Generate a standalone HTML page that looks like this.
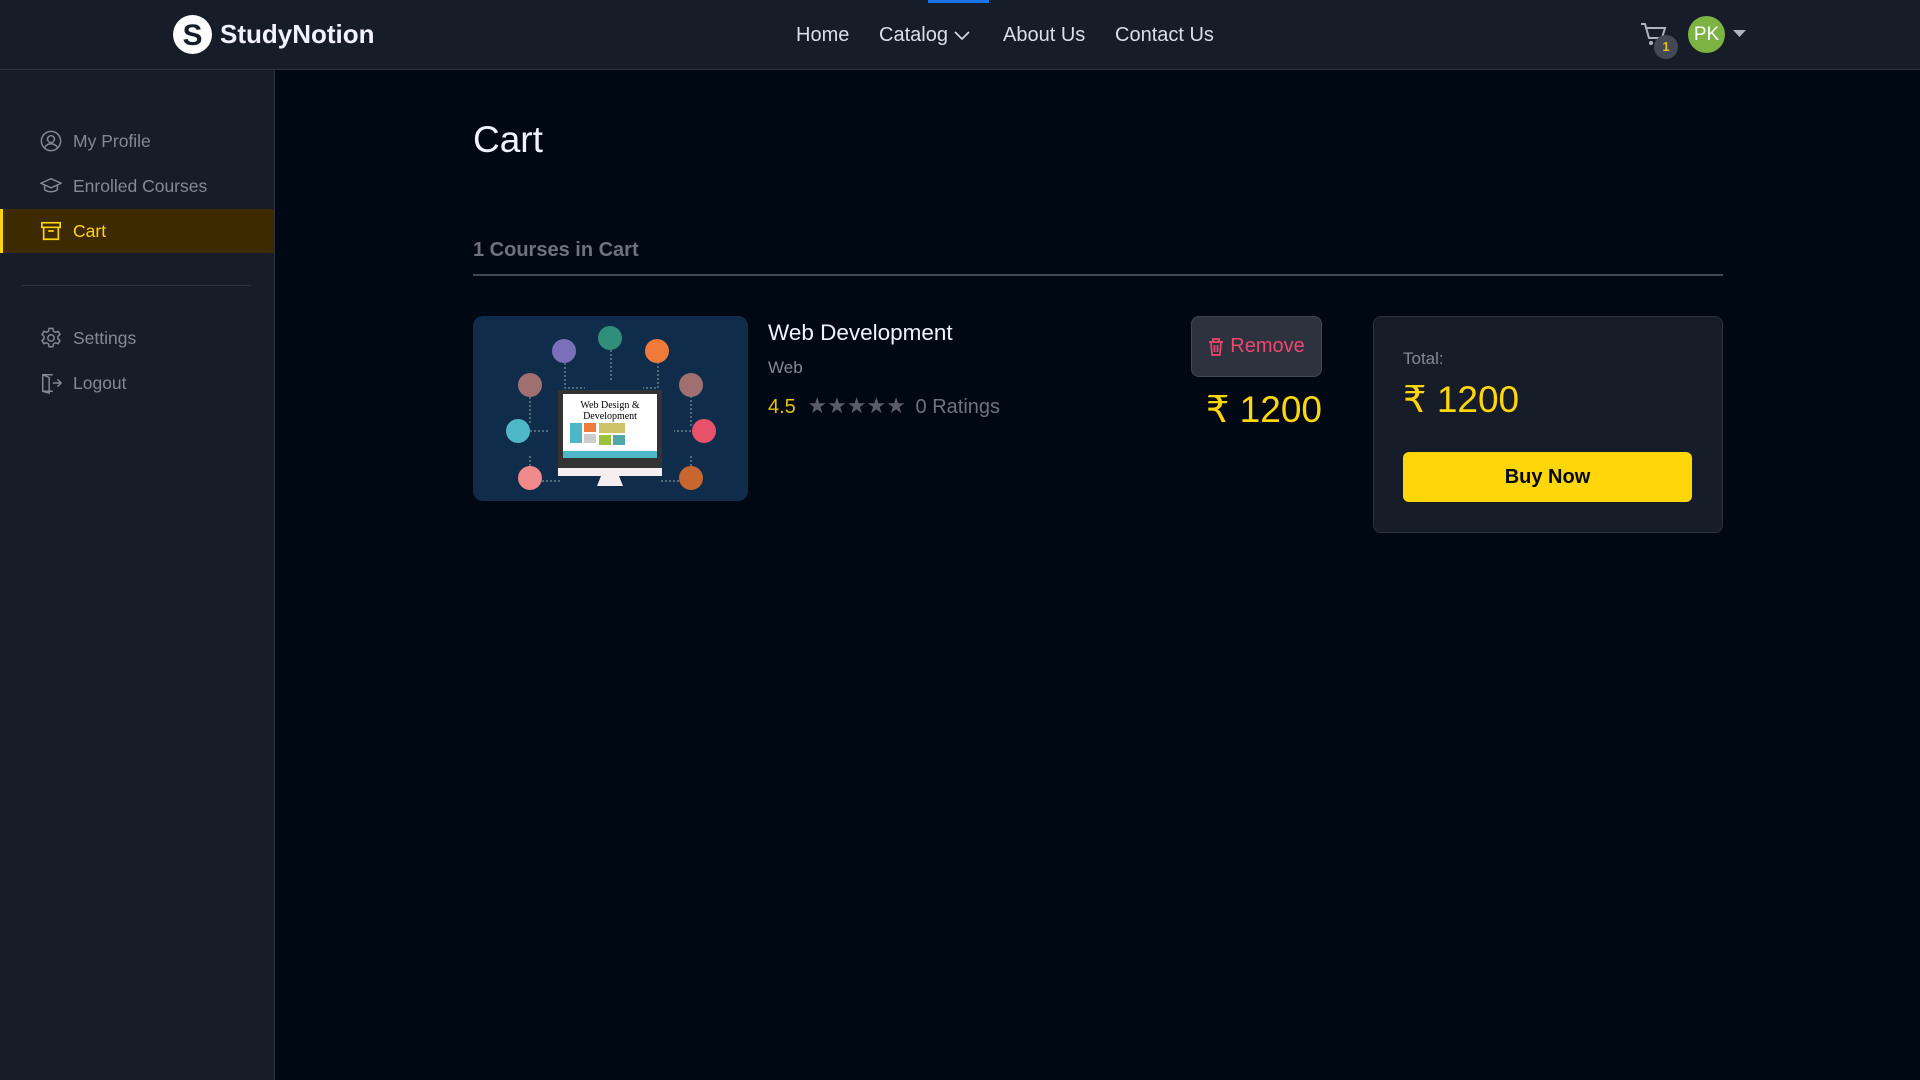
<!DOCTYPE html>
<html><head><meta charset="utf-8"><style>
*{margin:0;padding:0;box-sizing:border-box}
body{width:1920px;height:1080px;background:#000814;font-family:"Liberation Sans",Arial,sans-serif;position:relative;overflow:hidden;color:#F1F2FF}
.hdr{position:absolute;left:0;top:0;width:1920px;height:70px;background:#161D29;border-bottom:1px solid #2C333F}
.abs{position:absolute}
.nav{position:absolute;top:24px;font-size:20px;color:#DBDDEA}
.side{position:absolute;left:0;top:70px;width:275px;height:1010px;background:#161D29;border-right:1px solid #2C333F}
.it{position:absolute;left:0;width:274px;height:44px;display:flex;align-items:center;padding-left:40px;font-size:17.5px;color:#838894}
.it svg{margin-right:11px}
</style></head><body>
<div class="hdr"></div>
<div class="abs" style="left:928px;top:0;width:61px;height:3px;background:#1a73e8"></div>
<svg class="abs" style="left:172px;top:14px" width="41" height="41" viewBox="0 0 40 40"><circle cx="20" cy="20" r="19" fill="#fff"/><text x="20" y="30" text-anchor="middle" font-family="Liberation Sans" font-weight="bold" font-size="29" fill="#161D29">S</text></svg>
<div class="abs" style="left:220px;top:19px;font-size:26px;font-weight:bold;color:#F1F2FF">StudyNotion</div>
<div class="nav" style="left:796px">Home</div>
<div class="nav" style="left:879px">Catalog <svg width="16" height="10" viewBox="0 0 16 10" style="vertical-align:middle"><path d="M1 1l7 7 7-7" fill="none" stroke="#DBDDEA" stroke-width="1.6"/></svg></div>
<div class="nav" style="left:1003px">About Us</div>
<div class="nav" style="left:1115px">Contact Us</div>
<svg class="abs" style="left:1640px;top:22px" width="28" height="26" viewBox="0 0 28 26"><path d="M1 2h4l4 14h13l3-10H7" fill="none" stroke="#AFB2BF" stroke-width="2"/><circle cx="11" cy="21" r="2" fill="#AFB2BF"/><circle cx="20" cy="21" r="2" fill="#AFB2BF"/></svg>
<div class="abs" style="left:1654px;top:35px;width:24px;height:24px;border-radius:50%;background:#424854;color:#E7C009;font-size:13px;font-weight:bold;text-align:center;line-height:24px">1</div>
<div class="abs" style="left:1688px;top:16px;width:37px;height:37px;border-radius:50%;background:#7CB342;color:#fff;font-size:19px;text-align:center;line-height:37px">PK</div>
<svg class="abs" style="left:1733px;top:30px" width="13" height="8"><path d="M0 0h13L6.5 7z" fill="#AFB2BF"/></svg>

<div class="side">
<div class="it" style="top:49px"><svg width="22" height="22" viewBox="0 0 24 24" fill="none" stroke="#838894" stroke-width="1.6"><circle cx="12" cy="12" r="10.5"/><circle cx="12" cy="10" r="3.8"/><path d="M5 19c2-3 4.5-4 7-4s5 1 7 4"/></svg>My Profile</div>
<div class="it" style="top:94px"><svg width="22" height="22" viewBox="0 0 24 24" fill="none" stroke="#838894" stroke-width="1.6"><path d="M1 9l11-5 11 5-11 5z"/><path d="M5 11v5c3 3 11 3 14 0v-5"/></svg>Enrolled Courses</div>
<div class="it" style="top:139px;background:#3D2A01;border-left:3px solid #FFD60A;padding-left:37px;color:#FFD60A"><svg width="22" height="22" viewBox="0 0 24 24" fill="none" stroke="#FFD60A" stroke-width="1.8"><rect x="2" y="3" width="20" height="5"/><path d="M4 8v13h16V8M9 12h6"/></svg>Cart</div>
<div class="abs" style="left:22px;top:215px;width:229px;height:1px;background:#2C333F"></div>
<div class="it" style="top:246px"><svg width="22" height="22" viewBox="0 0 24 24" fill="none" stroke="#838894" stroke-width="1.6"><circle cx="12" cy="12" r="3.5"/><path d="M10 1.5h4l.6 3 2.3 1.3 2.9-1 2 3.4-2.3 2v2.6l2.3 2-2 3.4-2.9-1-2.3 1.3-.6 3h-4l-.6-3-2.3-1.3-2.9 1-2-3.4 2.3-2v-2.6l-2.3-2 2-3.4 2.9 1 2.3-1.3z"/></svg>Settings</div>
<div class="it" style="top:291px"><svg width="22" height="22" viewBox="0 0 24 24" fill="none" stroke="#838894" stroke-width="1.6"><path d="M14 3H3v18h11M3 3l7 3v17l-7-2M14 12h9M19 8l4 4-4 4"/></svg>Logout</div>
</div>

<div class="abs" style="left:473px;top:119px;font-size:37px;color:#F1F2FF">Cart</div>
<div class="abs" style="left:473px;top:239px;font-size:20px;font-weight:bold;color:#6E727F">1 Courses in Cart</div>
<div class="abs" style="left:473px;top:274px;width:1250px;height:2px;background:#424854"></div>

<svg class="abs" style="left:473px;top:316px" width="275" height="185" viewBox="0 0 275 185">
<rect width="275" height="185" rx="10" fill="#0f2d4a"/>
<g stroke="#8aa" stroke-width="1" stroke-dasharray="2 2" fill="none"><path d="M92 47v25h20M138 26v40M185 42v30h-15M57 69v40M218 72v40M45 115h30M226 115h-25M57 154v-15M218 154v-15M57 165h30M218 165h-30"/></g>
<circle cx="91" cy="35" r="12" fill="#7a6fb8"/><circle cx="137" cy="22" r="12" fill="#2f8f7a"/><circle cx="184" cy="35" r="12" fill="#f07a3a"/>
<circle cx="57" cy="69" r="12" fill="#a07070"/><circle cx="218" cy="69" r="12" fill="#a07070"/>
<circle cx="45" cy="115" r="12" fill="#4fb8c8"/><circle cx="231" cy="115" r="12" fill="#e9506a"/>
<circle cx="57" cy="162" r="12" fill="#f08a8a"/><circle cx="218" cy="162" r="12" fill="#c9652f"/>
<rect x="85" y="74" width="104" height="78" fill="#333"/><rect x="90" y="78" width="94" height="64" fill="#fff"/>
<text x="137" y="92" text-anchor="middle" font-family="Liberation Serif" font-size="10" fill="#000">Web Design &amp;</text>
<text x="137" y="103" text-anchor="middle" font-family="Liberation Serif" font-size="10" fill="#000">Development</text>
<rect x="97" y="107" width="12" height="20" fill="#4fb8c8"/><rect x="111" y="107" width="12" height="9" fill="#f07a3a"/><rect x="111" y="118" width="12" height="9" fill="#ccc"/><rect x="126" y="107" width="26" height="10" fill="#cfc36a"/><rect x="126" y="119" width="12" height="10" fill="#9ac13a"/><rect x="140" y="119" width="12" height="10" fill="#4fa8a8"/>
<rect x="90" y="135" width="94" height="7" fill="#4fb8c8"/><rect x="85" y="152" width="104" height="8" fill="#f4eef0"/><path d="M128 160h18l4 10h-26z" fill="#f4eef0"/>
</svg>

<div class="abs" style="left:768px;top:320px;font-size:22.5px;color:#F1F2FF">Web Development</div>
<div class="abs" style="left:768px;top:358px;font-size:17px;color:#838894">Web</div>
<div class="abs" style="left:768px;top:393px;font-size:20px;color:#E7C009">4.5 <span style="color:#585D69;font-size:22px;letter-spacing:0px;margin-left:6px">★★★★★</span> <span style="color:#6E727F;margin-left:4px">0 Ratings</span></div>

<div class="abs" style="left:1191px;top:316px;width:131px;height:61px;background:#2C333F;border:1px solid #424854;border-radius:8px;color:#EF476F;font-size:20px;display:flex;align-items:center;justify-content:center"><svg width="16" height="18" viewBox="0 0 16 18" fill="none" stroke="#EF476F" stroke-width="1.7" style="margin-right:6px"><path d="M1 4h14M5 4V1h6v3M3 4l1 13h8l1-13M6.5 7v7M9.5 7v7"/></svg>Remove</div>
<div class="abs" style="left:1160px;top:388px;width:162px;text-align:right;font-size:37px;color:#FFD60A">₹ 1200</div>

<div class="abs" style="left:1373px;top:316px;width:350px;height:217px;background:#161D29;border:1px solid #2C333F;border-radius:8px"></div>
<div class="abs" style="left:1403px;top:349px;font-size:17px;color:#838894">Total:</div>
<div class="abs" style="left:1403px;top:378px;font-size:37px;color:#FFD60A">₹ 1200</div>
<div class="abs" style="left:1403px;top:452px;width:289px;height:50px;background:#FFD60A;border-radius:6px;color:#000814;font-size:20px;font-weight:bold;text-align:center;line-height:50px">Buy Now</div>
</body></html>
